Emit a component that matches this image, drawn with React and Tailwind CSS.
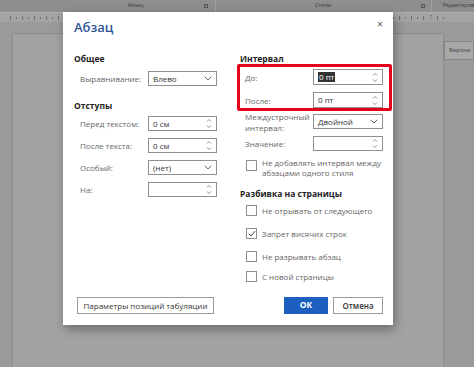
const font = "font-['Open_Sans','Noto_Sans',sans-serif]"

function Spinner() {
  return (
    <svg width="6" height="11" viewBox="0 0 6 11" className="shrink-0">
      <path d="M1 3.5 L3 1.5 L5 3.5" fill="none" stroke="#777" strokeWidth="0.8" />
      <path d="M1 7.5 L3 9.5 L5 7.5" fill="none" stroke="#777" strokeWidth="0.8" />
    </svg>
  )
}

function Chevron() {
  return (
    <svg width="8" height="5" viewBox="0 0 8 5" className="shrink-0">
      <path d="M0.8 0.8 L4 4 L7.2 0.8" fill="none" stroke="#555" strokeWidth="0.9" />
    </svg>
  )
}

function Field({ value, kind = 'spin', selected = false }) {
  return (
    <div className="flex h-full items-center justify-between border border-[#8f8f8f] bg-white pl-[4px] pr-[4px] text-[8px] leading-none text-[#333]">
      {selected ? <span className="bg-[#333] px-[1px] py-[1px] text-white">{value}</span> : <span>{value}</span>}
      {kind === 'spin' ? <Spinner /> : <Chevron />}
    </div>
  )
}

function Row({ label, labelWidth, inputWidth, className = '', children }) {
  return (
    <div className={`flex items-center ${className}`}>
      <div className={`${labelWidth} whitespace-nowrap text-[8px] leading-[11px] text-[#666]`}>{label}</div>
      <div className={`${inputWidth} h-full`}>{children}</div>
    </div>
  )
}

function Check({ label, checked = false, className = '' }) {
  return (
    <div className={`flex h-[11px] items-center pl-[6px] ${className}`}>
      <div className="flex h-[11px] w-[11px] items-center justify-center border border-[#8f8f8f] bg-white">
        {checked && (
          <svg width="8" height="7" viewBox="0 0 8 7">
            <path d="M0.8 3.8 L3 6 L7.2 1" fill="none" stroke="#333" strokeWidth="0.9" />
          </svg>
        )}
      </div>
      <span className="ml-[5px] whitespace-nowrap text-[8px] leading-none text-[#666]">{label}</span>
    </div>
  )
}

function Ticks({ count }) {
  return (
    <div className="flex items-center gap-[5px]">
      {Array.from({ length: count }).map((_, i) => (
        <div key={i} className={`w-px bg-[#6f6f6f] ${i % 2 === 0 ? 'h-[4px]' : 'h-[2px]'}`} />
      ))}
    </div>
  )
}

export default function App() {
  return (
    <div className={`relative h-[367px] w-[474px] overflow-hidden bg-[#9a9a9a] ${font}`}>
      {/* ribbon */}
      <div className="flex h-[12px] items-center bg-[#8e8e8e] text-[5.5px] leading-none text-[#3a3a3a]">
        <div className="relative flex h-full w-[217px] items-center justify-center border-r border-[#a0a0a0]">
          <span className="ml-[56px]">Абзац</span>
          <span className="absolute right-[7px] top-[4px] h-[4px] w-[4px] border border-[#555]" />
        </div>
        <div className="relative flex h-full w-[217px] items-center justify-center border-r border-[#a0a0a0]">
          <span>Стили</span>
          <span className="absolute right-[6px] top-[4px] h-[4px] w-[4px] border border-[#555]" />
        </div>
        <span className="ml-[11px]">Редактиров</span>
      </div>

      {/* ruler */}
      <div className="flex h-[10px] items-center justify-between border-t border-[#b0b0b0] bg-[#a4a4a4] pl-[10px] pr-[30px]">
        <Ticks count={9} />
        <div className="flex items-center gap-[5px]">
          <Ticks count={7} />
          <span className="text-[5px] leading-none text-[#555]">7</span>
          <Ticks count={2} />
        </div>
      </div>

      {/* workspace */}
      <div className="flex h-[345px] pt-[11px]">
        <div className="ml-[12px] h-full w-[436px] border-l border-r border-t border-[#8c8c8c] bg-[#a2a2a2]" />
        <div className="pt-[8px]">
          <div className="flex h-[19px] w-[30px] items-center border border-[#858585] bg-[#a8a8a8] pl-[4px] text-[6px] text-[#444]">
            Верхни
          </div>
        </div>
      </div>

      {/* dialog */}
      <div className="absolute left-[63px] top-[12px] flex h-[313px] w-[330px] flex-col bg-white pb-[11px] pl-[11px] pr-[10px] pt-[8px] shadow-[2px_4px_10px_rgba(0,0,0,0.35)]">
        <div className="flex h-[32px] items-start justify-between">
          <h1 className="text-[13px] font-semibold leading-[14px] text-[#2f5597]">Абзац</h1>
          <span className="-mt-[1px] text-[10px] leading-none text-[#555]">×</span>
        </div>

        <div className="flex gap-[22px]">
          {/* left column */}
          <div className="flex w-[144px] flex-col">
            <div className="h-[14px] text-[8.5px] font-bold leading-[14px] text-[#222]">Общее</div>
            <Row className="mt-[5px] h-[15px]" labelWidth="w-[74px] pl-[6px]" inputWidth="w-[69px]" label="Выравнивание:">
              <Field value="Влево" kind="select" />
            </Row>
            <div className="mt-[13px] h-[14px] text-[8.5px] font-bold leading-[14px] text-[#222]">Отступы</div>
            <Row className="mt-[3px] h-[15px]" labelWidth="w-[74px] pl-[6px]" inputWidth="w-[69px]" label="Перед текстом:">
              <Field value="0 см" />
            </Row>
            <Row className="mt-[7px] h-[15px]" labelWidth="w-[74px] pl-[6px]" inputWidth="w-[69px]" label="После текста:">
              <Field value="0 см" />
            </Row>
            <Row className="mt-[7px] h-[15px]" labelWidth="w-[74px] pl-[6px]" inputWidth="w-[69px]" label="Особый:">
              <Field value="(нет)" kind="select" />
            </Row>
            <Row className="mt-[7px] h-[15px]" labelWidth="w-[74px] pl-[6px]" inputWidth="w-[69px]" label="На:">
              <Field value="" />
            </Row>
          </div>

          {/* right column */}
          <div className="relative flex w-[143px] flex-col">
            <div className="h-[14px] text-[8.5px] font-bold leading-[14px] text-[#222]">Интервал</div>
            <Row className="mt-[3px] h-[16px]" labelWidth="w-[73px] pl-[5px]" inputWidth="w-[70px]" label="До:">
              <Field value="0 пт" selected />
            </Row>
            <Row className="mt-[7px] h-[16px]" labelWidth="w-[73px] pl-[5px]" inputWidth="w-[70px]" label="После:">
              <Field value="0 пт" />
            </Row>
            <Row
              className="mt-[6px] h-[15px]"
              labelWidth="w-[73px] pl-[5px]"
              inputWidth="w-[70px]"
              label={
                <>
                  Междустрочный
                  <br />
                  интервал:
                </>
              }
            >
              <Field value="Двойной" kind="select" />
            </Row>
            <Row className="mt-[7px] h-[15px]" labelWidth="w-[73px] pl-[5px]" inputWidth="w-[70px]" label="Значение:">
              <Field value="" />
            </Row>
            <div className="mt-[7px] flex items-start pl-[6px]">
              <div className="mt-[2px] h-[11px] w-[11px] shrink-0 border border-[#8f8f8f] bg-white" />
              <span className="ml-[5px] whitespace-nowrap text-[8px] leading-[10px] text-[#666]">
                Не добавлять интервал между
                <br />
                абзацами одного стиля
              </span>
            </div>
            <div className="mt-[9px] h-[14px] text-[8.5px] font-bold leading-[14px] text-[#222]">
              Разбивка на страницы
            </div>
            <Check className="mt-[4px]" label="Не отрывать от следующего" />
            <Check className="mt-[12px]" label="Запрет висячих строк" checked />
            <Check className="mt-[12px]" label="Не разрывать абзац" />
            <Check className="mt-[9px]" label="С новой страницы" />

            {/* highlight annotation */}
            <div className="pointer-events-none absolute left-[-3px] top-[12px] h-[47px] w-[155px] rounded-[2px] border-[3px] border-[#e3001b]" />
          </div>
        </div>

        <div className="mt-auto flex h-[17px] items-center justify-between">
          <button className="ml-[3px] h-full w-[137px] whitespace-nowrap border border-[#9a9a9a] bg-white text-[8px] leading-none text-[#333]">
            Параметры позиций табуляции
          </button>
          <div className="flex h-full gap-[5px]">
            <button className="h-full w-[44px] bg-[#1d5fbf] text-[8.5px] font-bold leading-none text-white">ОК</button>
            <button className="h-full w-[50px] border border-[#9a9a9a] bg-white text-[8px] font-semibold leading-none text-[#333]">
              Отмена
            </button>
          </div>
        </div>
      </div>
    </div>
  )
}
